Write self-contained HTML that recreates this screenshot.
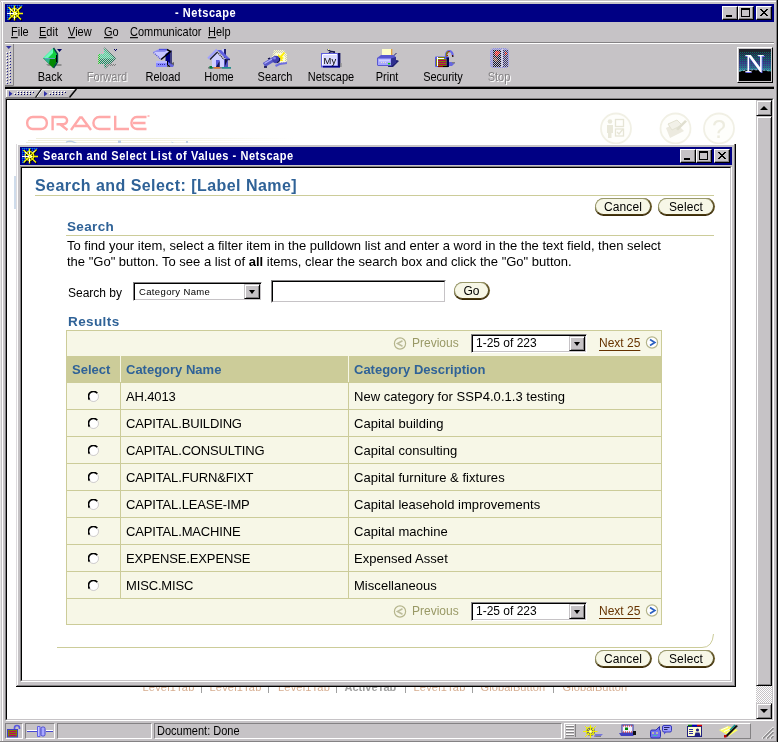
<!DOCTYPE html>
<html>
<head>
<meta charset="utf-8">
<title>Netscape</title>
<style>
html,body{margin:0;padding:0;}
body{width:781px;height:742px;overflow:hidden;background:#fff;font-family:"Liberation Sans",sans-serif;font-size:11px;color:#000;position:relative;}
.a{position:absolute;}
.t{position:absolute;white-space:nowrap;line-height:1;}
#win{left:0;top:0;width:778px;height:742px;background:#c6c3c6;}
.title{background:#000084;color:#fff;font-weight:bold;font-size:11px;}
.tb{position:absolute;width:16px;height:14px;background:#c6c3c6;box-sizing:border-box;border:1px solid;border-color:#fff #000 #000 #fff;box-shadow:inset -1px -1px 0 #848284;}
.menu span.m{position:absolute;top:27px;line-height:1;font-size:11px;transform:scaleY(1.125);transform-origin:0 84%;}
.menu u{text-decoration:underline;}
.lbl{position:absolute;top:71px;width:56px;text-align:center;font-size:11px;line-height:13px;transform:scaleY(1.125);transform-origin:0 81%;}
.dis{color:#848284;text-shadow:1px 1px 0 #fff;}
/* popup content */
.h1{color:#2f6297;font-weight:bold;font-size:16px;letter-spacing:0.45px;}
.h2{color:#2f6297;font-weight:bold;font-size:13.500px;letter-spacing:0.35px;}
.p{font-size:13px;}
.btn{position:absolute;height:17px;box-sizing:border-box;border:1px solid;border-color:#99996b #5a5229 #4a3a10 #99996b;border-radius:9px;background:#f7f7e7;font-size:12px;letter-spacing:0.1px;text-align:center;line-height:17px;box-shadow:0 1px 0 #3a2a08, 1px 0 0 #6b5a29;}
.row{position:absolute;left:67px;width:594px;height:26px;background:#f7f7e7;border-top:1px solid #cccc99;}
.row .c1{position:absolute;left:59px;top:6.500px;font-size:13px;letter-spacing:-0.15px;white-space:nowrap;line-height:1;}
.row .c2{position:absolute;left:287px;top:6.500px;font-size:13px;letter-spacing:0.04px;white-space:nowrap;line-height:1;}
.radio{position:absolute;left:21px;top:8px;}
.vl{position:absolute;top:0;width:1px;height:26px;background:#cccc99;}

.th{color:#2f6297;font-weight:bold;font-size:13px;letter-spacing:0;}
.sel{position:absolute;background:#fff;box-sizing:border-box;border:1px solid;border-color:#848284 #fff #fff #848284;box-shadow:inset 1px 1px 0 #000, inset -1px -1px 0 #c6c3c6;}
.dd{position:absolute;background:#c6c3c6;box-sizing:border-box;border:1px solid;border-color:#c6c3c6 #000 #000 #c6c3c6;box-shadow:inset 1px 1px 0 #fff, inset -1px -1px 0 #848284;}
.dd i{position:absolute;left:4px;top:5px;width:0;height:0;border:3.500px solid transparent;border-top:4px solid #000;border-bottom:0;}
.sb{position:absolute;background:#c6c3c6;box-sizing:border-box;border:1px solid;border-color:#c6c3c6 #000 #000 #c6c3c6;box-shadow:inset 1px 1px 0 #fff, inset -1px -1px 0 #848284;}
.sp{position:absolute;top:723px;height:16px;box-sizing:border-box;border:1px solid;border-color:#848284 #fff #fff #848284;}
.sy{transform:scaleY(1.125);transform-origin:0 84%;}
</style>
</head>
<body>
<div id="win" class="a" style="will-change:transform;">
  <!-- frame -->
  <div class="a" style="left:1px;top:1px;width:775px;height:1px;background:#fff"></div>
  <div class="a" style="left:0;top:2px;width:1px;height:740px;background:#e4e4e4"></div>
  <div class="a" style="left:2px;top:1px;width:1px;height:741px;background:#fff"></div>
  <div class="a" style="left:776px;top:0;width:1px;height:742px;background:#848284"></div>
  <div class="a" style="left:777px;top:0;width:1px;height:742px;background:#000"></div>
  <div class="a" style="left:0;top:741px;width:777px;height:1px;background:#848284"></div>
  <!-- title bar -->
  <div class="a title" style="left:5px;top:4px;width:769px;height:18px;">
    <svg class="a" style="left:2px;top:1px" width="16" height="16" viewBox="0 0 16 16"><defs><pattern id="nd1" width="2" height="2" patternUnits="userSpaceOnUse"><rect width="2" height="2" fill="#0018e0"/><rect x="0" y="0" width="1" height="1" fill="#0090c0"/><rect x="1" y="1" width="1" height="1" fill="#000084"/></pattern></defs><path d="M0,0H16V2H12L8,5L4,2L0,2z M0,2H3L5,8L3,15H0z" fill="url(#nd1)"/><g stroke="#000" stroke-width="1.500" fill="none"><path d="M2.500,2.500L15,15.500M15,2L2.500,15.500M8.500,1V16"/><circle cx="8.200" cy="8.800" r="4.300"/></g><g stroke="#f8f800" stroke-width="1.400" fill="none"><path d="M1.500,2L14,14.500M14.500,1.500L1.500,14.500M7.500,0.500V15.500M8,8.500H16"/><circle cx="7.500" cy="8" r="4.300" stroke-width="1.200"/></g><path d="M0,8.500H10" stroke="#fff" stroke-width="1.200"/><path d="M7.500,3.500V6M7.500,11V14" stroke="#fff" stroke-width="1"/><path d="M3,4l2.500,2M12.500,3l-1.500,1.500" stroke="#fff" stroke-width="1"/><rect x="6.500" y="7" width="2.500" height="2.500" fill="#fff"/><rect x="7" y="7.500" width="1.500" height="1.500" fill="#f8f800"/></svg>
    <span class="t sy" style="left:170px;top:4px;letter-spacing:0.56px;">- Netscape</span>
    <div class="tb" style="left:717px;top:2px;"><div class="a" style="left:3px;top:8px;width:6px;height:2px;background:#000"></div></div>
    <div class="tb" style="left:733px;top:2px;"><div class="a" style="left:2px;top:1px;width:9px;height:9px;box-sizing:border-box;border:1px solid #000;border-top-width:2px;"></div></div>
    <div class="tb" style="left:751px;top:2px;"><svg class="a" style="left:3px;top:2px" width="8" height="7"><path d="M0,0L7,7M1,0L8,7M7,0L0,7M8,0L1,7" stroke="#000" stroke-width="1" fill="none" shape-rendering="crispEdges"/></svg></div>
  </div>
  <!-- menubar -->
  <div class="menu">
    <span class="m" style="left:11px"><u>F</u>ile</span>
    <span class="m" style="left:39px"><u>E</u>dit</span>
    <span class="m" style="left:68px"><u>V</u>iew</span>
    <span class="m" style="left:104px"><u>G</u>o</span>
    <span class="m" style="left:130px"><u>C</u>ommunicator</span>
    <span class="m" style="left:208px"><u>H</u>elp</span>
  </div>
  <div class="a" style="left:5px;top:42px;width:769px;height:1px;background:#848284"></div>
  <div class="a" style="left:5px;top:43px;width:769px;height:1px;background:#fff"></div>
  <!-- toolbar -->

  <svg class="a" style="left:0;top:44px" width="778" height="42" viewBox="0 44 778 42">
    <defs>
      <pattern id="dith" width="2" height="2" patternUnits="userSpaceOnUse"><rect x="0" y="0" width="1" height="1" fill="#c6c3c6"/><rect x="1" y="1" width="1" height="1" fill="#c6c3c6"/></pattern>
      <pattern id="dithy" width="2" height="2" patternUnits="userSpaceOnUse"><rect x="0" y="0" width="1" height="1" fill="#ffffc0"/><rect x="1" y="1" width="1" height="1" fill="#ffffc0"/></pattern>
      <pattern id="grip" width="4" height="4" patternUnits="userSpaceOnUse"><rect x="0" y="0" width="1" height="1" fill="#fff"/><rect x="1" y="1" width="1" height="1" fill="#000060"/><rect x="2" y="2" width="1" height="1" fill="#fff"/><rect x="3" y="3" width="1" height="1" fill="#000060"/></pattern>
    </defs>
    <!-- gripper -->
    <path d="M5,85.500H13.500V44" stroke="#848284" fill="none"/>
    <path d="M6,46h5.500l-2.750,3z" fill="#3030a0"/>
    <g><rect x="6" y="52" width="1" height="1" fill="#fff"/><rect x="7" y="53" width="1" height="1" fill="#202088"/><rect x="9" y="51" width="1" height="1" fill="#fff"/><rect x="10" y="52" width="1" height="1" fill="#202088"/><rect x="6" y="55" width="1" height="1" fill="#fff"/><rect x="7" y="56" width="1" height="1" fill="#202088"/><rect x="9" y="54" width="1" height="1" fill="#fff"/><rect x="10" y="55" width="1" height="1" fill="#202088"/><rect x="6" y="58" width="1" height="1" fill="#fff"/><rect x="7" y="59" width="1" height="1" fill="#202088"/><rect x="9" y="57" width="1" height="1" fill="#fff"/><rect x="10" y="58" width="1" height="1" fill="#202088"/><rect x="6" y="61" width="1" height="1" fill="#fff"/><rect x="7" y="62" width="1" height="1" fill="#202088"/><rect x="9" y="60" width="1" height="1" fill="#fff"/><rect x="10" y="61" width="1" height="1" fill="#202088"/><rect x="6" y="64" width="1" height="1" fill="#fff"/><rect x="7" y="65" width="1" height="1" fill="#202088"/><rect x="9" y="63" width="1" height="1" fill="#fff"/><rect x="10" y="64" width="1" height="1" fill="#202088"/><rect x="6" y="67" width="1" height="1" fill="#fff"/><rect x="7" y="68" width="1" height="1" fill="#202088"/><rect x="9" y="66" width="1" height="1" fill="#fff"/><rect x="10" y="67" width="1" height="1" fill="#202088"/><rect x="6" y="70" width="1" height="1" fill="#fff"/><rect x="7" y="71" width="1" height="1" fill="#202088"/><rect x="9" y="69" width="1" height="1" fill="#fff"/><rect x="10" y="70" width="1" height="1" fill="#202088"/><rect x="6" y="73" width="1" height="1" fill="#fff"/><rect x="7" y="74" width="1" height="1" fill="#202088"/><rect x="9" y="72" width="1" height="1" fill="#fff"/><rect x="10" y="73" width="1" height="1" fill="#202088"/><rect x="6" y="76" width="1" height="1" fill="#fff"/><rect x="7" y="77" width="1" height="1" fill="#202088"/><rect x="9" y="75" width="1" height="1" fill="#fff"/><rect x="10" y="76" width="1" height="1" fill="#202088"/><rect x="6" y="79" width="1" height="1" fill="#fff"/><rect x="7" y="80" width="1" height="1" fill="#202088"/><rect x="9" y="78" width="1" height="1" fill="#fff"/><rect x="10" y="79" width="1" height="1" fill="#202088"/><rect x="6" y="82" width="1" height="1" fill="#fff"/><rect x="7" y="83" width="1" height="1" fill="#202088"/><rect x="9" y="81" width="1" height="1" fill="#fff"/><rect x="10" y="82" width="1" height="1" fill="#202088"/></g>
    <!-- Back -->
    <path d="M46,64h15l1,1l-1,1h-13z" fill="#909090"/>
    <path d="M43,58L53,48L53,58z" fill="#50f0a8"/>
    <path d="M44,58L53,49L53,58z" fill="#80ffc8" opacity=".6"/>
    <path d="M53,48L55,51L57,54L57,58L48,58L53,53z" fill="#10d040"/>
    <path d="M43,58H57V62L55,65L53,68z" fill="#008800"/>
    <path d="M43,58H50L49,64z" fill="#30b090"/>
    <path d="M45,58.5H55" stroke="#60a0c0" stroke-width="1"/>
    <path d="M53.5,48L55.5,51L57.5,54V62L55.5,65L53.5,68" stroke="#004848" stroke-width="1.4" fill="none"/>
    <path d="M56.5,55V62" stroke="#000" stroke-width="1"/>
    <path d="M57,49h5l-2.5,3z" fill="#000060"/>
    <!-- Forward (disabled, dithered) -->
    <g>
      <path d="M104,48L115,58L105,68L104,64H99V54H104z" fill="#40e8a0"/>
      <path d="M99,58.5H115L105,68L104,64H99z" fill="#109060"/>
      <path d="M104,48L115,58.5L105,68" stroke="#006040" stroke-width="1.2" fill="none"/>
      <path d="M99,54v10" stroke="#00e000" stroke-width="1.4"/>
      <path d="M107,64h10l-2,2h-10z" fill="#808080"/>
      <path d="M113,49h5l-2.5,3z" fill="#000060"/>
      <rect x="96" y="46" width="24" height="24" fill="url(#dith)"/>
    </g>
    <!-- Reload -->
    <path d="M161,67h11l2,-2v-3l-2,1z" fill="#606060"/>
    <path d="M153,52L159,49H168L172,52L161,60z" fill="#c8c8ff"/>
    <path d="M153,52L159,49H168L165,52z" fill="#9090f0"/>
    <path d="M153.5,52.5L161,59.5" stroke="#4040d0" stroke-width="1.2" stroke-dasharray="1,1"/>
    <path d="M159,49.5H167" stroke="#5050e0" stroke-width="1.4"/>
    <path d="M165.5,54L171.5,50V65H165.5z" fill="#000084"/>
    <path d="M170,51.5L172,52V65H170z" fill="#404080"/>
    <path d="M167,49.5L170.5,51.5L161,59.5" stroke="#000" stroke-width="1.5" fill="none"/>
    <rect x="156" y="61" width="11" height="6" fill="#8888ff"/>
    <rect x="156" y="61" width="11" height="2" fill="#b8b8ff"/>
    <path d="M158,64.5h8" stroke="#3030a0" stroke-width="1" stroke-dasharray="1,1"/>
    <path d="M167,61v4l4,2h2l1,-2l-3,-1z" fill="#6868e0"/>
    <path d="M167.5,61V65L170,66.5" stroke="#000" stroke-width="1" fill="none"/>
    <!-- Home -->
    <rect x="208" y="67" width="23" height="1.6" fill="#808080"/>
    <rect x="209.500" y="66" width="3" height="2.6" fill="#008040"/>
    <rect x="214" y="67" width="6" height="1.6" fill="#e08030"/>
    <rect x="222" y="67" width="9" height="1.6" fill="#209090"/>
    <rect x="222" y="49" width="2" height="7" fill="#c8c8ff"/>
    <rect x="224" y="49" width="2" height="9" fill="#202070"/>
    <path d="M217,50H221L230,59H226z" fill="#6060e0"/>
    <path d="M212,58L217,53L224,60V67H212z" fill="#d0d0ff"/>
    <path d="M224,59H228V67H224z" fill="#5050c0"/>
    <path d="M225,59H228L225,66z" fill="#101040"/>
    <path d="M208,58.5L217,49.5" stroke="#a0a0ff" stroke-width="2.2"/>
    <path d="M210,59.5L217,52.5" stroke="#181838" stroke-width="1.3"/>
    <path d="M217,52L224,59.5" stroke="#181838" stroke-width="1.2" stroke-dasharray="1,1"/>
    <path d="M226,59.500H230" stroke="#202070" stroke-width="1.4"/>
    <rect x="216" y="60" width="3.600" height="7" fill="#5858d8"/>
    <path d="M219.600,61V67H216z" fill="#181858"/>
    <!-- Search -->
    <path d="M274,50h10l3,4v9h-13l-2,-6z" fill="url(#dithy)"/>
    <path d="M275,53h8l2,4v5h-9z" fill="#ffffd0"/>
    <path d="M278,54l2,2l4,-4l1,1l-3,4l2,1l-2,1l1,2h-3l1,-2l-3,-2z" fill="#ffee00"/>
    <path d="M275,65l4,-2l8,-1v2l-7,1l-4,2z" fill="#7070e0"/>
    <path d="M264,65L274,59" stroke="#5858c8" stroke-width="4.600"/>
    <path d="M264.500,63.500L273,58.500" stroke="#b0b0ff" stroke-width="1.300"/>
    <path d="M264,67h3M268,59l2,-1" stroke="#000040" stroke-width="1.300"/>
    <circle cx="276" cy="59.500" r="3.700" fill="#4040b0"/>
    <circle cx="274.500" cy="58" r="1.500" fill="#8080f0"/>
    <path d="M277,62.500a3.700,3.700 0 0 0 2.500,-4.500" stroke="#101040" stroke-width="1.200" fill="none"/>
    <!-- My Netscape -->
    <path d="M327.500,49.500L331,51.500L335,52M331,51.500L329,53M332,51.500l3,1.500" stroke="#181848" stroke-width="1.300" fill="none"/>
    <rect x="328" y="49" width="1" height="1" fill="#ffffa0"/>
    <rect x="321" y="53" width="19" height="14.400" fill="#6060e0"/>
    <rect x="338" y="53" width="2.400" height="14" fill="#101060"/>
    <rect x="323" y="66" width="17" height="1.500" fill="#000084"/>
    <rect x="322.500" y="54.500" width="15" height="11" fill="#dcdcff"/>
    <path d="M322.500,65.500V54.500H337" stroke="#fff" stroke-width="1" fill="none"/>
    <text x="323.600" y="63.600" font-family="Liberation Sans" font-size="9.500" fill="#000" textLength="12.500" lengthAdjust="spacingAndGlyphs">My</text>
    <rect x="340" y="63" width="2" height="4" fill="#909090" opacity=".7"/>
    <!-- Print -->
    <path d="M392,57L396,53H397L393,57z" fill="#202070"/>
    <path d="M389,62l8,-2l2,1l-6,6h-5z" fill="#202070"/>
    <rect x="382" y="49" width="9.500" height="8" fill="#ffffc8"/>
    <rect x="391" y="49" width="1.300" height="8" fill="#e0a040"/>
    <path d="M377,58L381,55H393L396,57V62L391,66H378L377,65z" fill="#5858d0"/>
    <rect x="378" y="58.500" width="13" height="6.500" fill="#a8a8ff"/>
    <rect x="379" y="59.500" width="11" height="2" fill="#d0d0ff"/>
    <path d="M391,58.500L396,57V62L391,66z" fill="#303090"/>
    <rect x="388" y="63" width="2.300" height="1.400" fill="#00d000"/>
    <path d="M381,62.500h6" stroke="#e8e8c0" stroke-width="1" stroke-dasharray="1,1"/>
    <!-- Security -->
    <path d="M449,62h6v1l-3,3h-3z" fill="#6868e0"/>
    <rect x="452" y="62" width="3" height="1.300" fill="#808080"/>
    <path d="M446,57V54.500a3.300,3.300 0 0 1 6.600,0v1" stroke="#6868e8" stroke-width="2.200" fill="none"/>
    <path d="M446.500,57V54.500a2.800,2.800 0 0 1 2.800,-2.800" stroke="#808000" stroke-width="1.200" fill="none"/>
    <path d="M447.500,56V53.500M448.500,51.500l2,0M452.500,55v1" stroke="#c00000" stroke-width="1" stroke-dasharray="1,1" fill="none"/>
    <rect x="452" y="55.500" width="1.500" height="1.300" fill="#000"/>
    <rect x="435" y="56.500" width="14" height="10.500" rx="1" fill="#5858e0"/>
    <rect x="446.500" y="57.500" width="2.500" height="9.500" fill="#000050"/>
    <rect x="436" y="59" width="10.500" height="7" fill="#808000"/>
    <path d="M437,60.500h9M437,62.500h9M437,64.500h9" stroke="#b00060" stroke-width="1"/>
    <path d="M437.500,57V66" stroke="#fff" stroke-width="1"/>
    <path d="M438,57.500h7" stroke="#808000" stroke-width="1"/>
    <path d="M438,58.500h6" stroke="#fff" stroke-width="1"/>
    <path d="M438,66.500h5" stroke="#900000" stroke-width="1.200"/>
    <path d="M443,66.500h5" stroke="#000" stroke-width="1.200"/>
    <!-- Stop (disabled, dithered) -->
    <g>
      <rect x="490" y="48" width="19" height="20" rx="4" fill="#8888f0"/><rect x="501" y="49" width="2" height="18" fill="#d0d0ff"/>
      <rect x="493" y="50" width="8" height="17" fill="#101030"/>
      <rect x="503" y="50" width="5" height="17" fill="#303070"/>
      <path d="M494,52h6l-3,5z" fill="#ff0000"/>
      <circle cx="497" cy="53" r="2.300" fill="#ff0000"/>
      <rect x="505" y="52" width="2" height="3" fill="#e00000"/>
      <path d="M494,58l3,3" stroke="#ff8040" stroke-width="1.400"/>
      <rect x="488" y="46" width="24" height="24" fill="url(#dith)"/>
    </g>
  </svg>
  <div id="toolbar">
    <div class="lbl" style="left:22px">Back</div>
    <div class="lbl dis" style="left:79px">Forward</div>
    <div class="lbl" style="left:135px">Reload</div>
    <div class="lbl" style="left:191px">Home</div>
    <div class="lbl" style="left:247px">Search</div>
    <div class="lbl" style="left:303px">Netscape</div>
    <div class="lbl" style="left:359px">Print</div>
    <div class="lbl" style="left:415px">Security</div>
    <div class="lbl dis" style="left:471px">Stop</div>
  </div>

  <!-- N logo -->
  <div class="a" style="left:737px;top:47px;width:36px;height:36px;box-sizing:border-box;border:1px solid;border-color:#fff #000 #000 #fff;">
    <svg class="a" style="left:1px;top:1px" width="32" height="32" viewBox="0 0 32 32">
      <defs>
        <linearGradient id="ng" x1="0" y1="0" x2="0" y2="1"><stop offset="0" stop-color="#202028"/><stop offset=".12" stop-color="#202830"/><stop offset=".3" stop-color="#204858"/><stop offset=".42" stop-color="#383880"/><stop offset=".58" stop-color="#386888"/><stop offset=".66" stop-color="#40a0a8"/><stop offset="1" stop-color="#40a0a8"/></linearGradient>
        <pattern id="ndd" width="2" height="2" patternUnits="userSpaceOnUse"><rect x="0" y="0" width="1" height="1" fill="#30308a" opacity=".55"/><rect x="1" y="1" width="1" height="1" fill="#008c8c" opacity=".55"/></pattern>
      </defs>
      <rect width="32" height="32" fill="url(#ng)"/>
      <rect y="3" width="32" height="19" fill="url(#ndd)"/>
      <ellipse cx="16" cy="61" rx="60" ry="40" fill="#000"/>
      <path d="M0,22.300Q16,19.500 32,22.300" stroke="#d0d0e8" stroke-width="1" fill="none" stroke-dasharray="2,2" opacity=".6"/>
      <text x="5.500" y="23.500" font-family="Liberation Serif" font-size="26" fill="#7070f0" textLength="21" lengthAdjust="spacingAndGlyphs">N</text>
      <text x="5.500" y="23" font-family="Liberation Serif" font-size="26" fill="#fff" textLength="20" lengthAdjust="spacingAndGlyphs">N</text>
    </svg>
  </div>
  <!-- collapsed toolbars -->
  <svg class="a" style="left:0;top:88px" width="120" height="10" viewBox="0 88 120 10">
    <path d="M6.500,97V89.500H42" stroke="#fff" fill="none"/>
    <path d="M36.500,97.500L42.500,89.500H76" stroke="#fff" fill="none"/>
    <path d="M6,97.500H68.500L75.500,89" stroke="#848284" fill="none"/>
    <path d="M35.500,97.500L41.500,89" stroke="#000" stroke-width="1.200" fill="none"/>
    <path d="M69.500,97.500L76.500,89" stroke="#000" stroke-width="1.200" fill="none"/>
    <path d="M9,91l3.500,2.700L9,96.400z" fill="#3030a8"/>
    <path d="M44,91l3.500,2.700L44,96.400z" fill="#3030a8"/>
    <g fill="#000060"><rect x="15" y="94" width="1" height="1"/>
      <rect x="18" y="92" width="1" height="1"/><rect x="18" y="94" width="1" height="1"/><rect x="21" y="92" width="1" height="1"/><rect x="21" y="94" width="1" height="1"/><rect x="24" y="92" width="1" height="1"/><rect x="24" y="94" width="1" height="1"/><rect x="27" y="92" width="1" height="1"/><rect x="27" y="94" width="1" height="1"/><rect x="30" y="92" width="1" height="1"/><rect x="30" y="94" width="1" height="1"/><rect x="33" y="92" width="1" height="1"/>
      <rect x="50" y="94" width="1" height="1"/><rect x="53" y="92" width="1" height="1"/><rect x="53" y="94" width="1" height="1"/><rect x="56" y="92" width="1" height="1"/><rect x="56" y="94" width="1" height="1"/><rect x="59" y="92" width="1" height="1"/><rect x="59" y="94" width="1" height="1"/><rect x="62" y="92" width="1" height="1"/><rect x="62" y="94" width="1" height="1"/><rect x="65" y="92" width="1" height="1"/>
    </g>
    <g fill="#fff"><rect x="17" y="91" width="1" height="1"/><rect x="20" y="91" width="1" height="1"/><rect x="23" y="91" width="1" height="1"/><rect x="26" y="91" width="1" height="1"/><rect x="29" y="91" width="1" height="1"/><rect x="32" y="91" width="1" height="1"/><rect x="14" y="93" width="1" height="1"/><rect x="17" y="93" width="1" height="1"/><rect x="20" y="93" width="1" height="1"/><rect x="23" y="93" width="1" height="1"/><rect x="26" y="93" width="1" height="1"/><rect x="29" y="93" width="1" height="1"/>
      <rect x="52" y="91" width="1" height="1"/><rect x="55" y="91" width="1" height="1"/><rect x="58" y="91" width="1" height="1"/><rect x="61" y="91" width="1" height="1"/><rect x="64" y="91" width="1" height="1"/><rect x="49" y="93" width="1" height="1"/><rect x="52" y="93" width="1" height="1"/><rect x="55" y="93" width="1" height="1"/><rect x="58" y="93" width="1" height="1"/><rect x="61" y="93" width="1" height="1"/>
    </g>
  </svg>
  <div class="a" style="left:5px;top:86px;width:769px;height:1px;background:#848284"></div>
  <div class="a" style="left:5px;top:87px;width:769px;height:2px;background:#000"></div>
  <!-- content area sunken -->
  <div class="a" style="left:5px;top:98px;width:769px;height:623px;background:#fff;box-sizing:border-box;border:1px solid;border-color:#848284 #fff #fff #848284;">
    <div class="a" style="left:0;top:0;right:0;bottom:0;box-sizing:border-box;border:1px solid;border-color:#000 #c6c3c6 #c6c3c6 #000;"></div>
  </div>


  <!-- page behind -->
  <svg class="a" style="left:7px;top:100px" width="749" height="619" viewBox="7 100 749 619">
    <g fill="none" stroke="#ffa9a9" stroke-width="2.400">
      <rect x="27.200" y="117" width="19.600" height="12" rx="5.500"/>
      <path d="M52.600,130.200V117H63.500a3.600,3.600 0 0 1 0,7.200H56.500M60,124.200L67.500,130"/>
      <path d="M71,130L80,117.500h1.800L91,130M75,126H88"/>
      <path d="M110.500,117H99.200a5.800,6 0 0 0 0,12H110.500"/>
      <path d="M115.200,115.800V129H129"/>
      <path d="M146.500,117H136.800a5.400,6 0 0 0 0,12H146.500M133,123H145.500"/>
    </g>
    <rect x="147.500" y="115" width="2" height="2" fill="#ffc4c4"/>
    <defs><linearGradient id="fade" gradientUnits="userSpaceOnUse" x1="150" y1="0" x2="295" y2="0"><stop offset="0" stop-color="#efeedd"/><stop offset="1" stop-color="#efeedd" stop-opacity="0"/></linearGradient></defs>
    <g stroke="url(#fade)" stroke-width="1">
      <path d="M36,138.500H300"/><path d="M28,140.500H300"/><path d="M26,142.500H300"/>
    </g>
    <g fill="#bccde3">
      <path d="M66,143v-1.500q4,-2 8,0l3,1.500h-3l-2,-1h-4z"/>
      <rect x="118" y="140.500" width="3" height="2.500"/>
      <path d="M171,141.500l3,1.500h-2z"/><rect x="186" y="141" width="2" height="2"/>
    </g>
    <rect x="14" y="176" width="2" height="33" fill="#cfdceb"/>
    <!-- faded round icons -->
    <g fill="#fefefb" stroke="#f1f0e5" stroke-width="1.800">
      <circle cx="616" cy="128.500" r="15"/>
      <circle cx="675.500" cy="128.500" r="15"/>
      <circle cx="719" cy="128.500" r="15"/>
    </g>
    <g fill="#e9e8da" transform="translate(0,1)">
      <circle cx="610" cy="120.500" r="2.300"/>
      <path d="M607,124h6v8h-1.500v5h-3.500v-5h-1z"/>
      <rect x="615.500" y="118.500" width="8" height="7" fill="none" stroke="#e6e5d6" stroke-width="1.300"/>
      <rect x="615.500" y="128" width="8" height="7" fill="none" stroke="#e6e5d6" stroke-width="1.300"/>
      <path d="M617,131l2,2l4,-5" stroke="#e6e5d6" stroke-width="1.300" fill="none"/>
      <path d="M666,127l10,-5l8,8l-14,7z" fill="#eceadf"/>
      <path d="M668,123l9,-4l5,5l-10,5z" fill="#f2f1e8" stroke="#e3e2d2" stroke-width="1"/>
      <path d="M676,128l9,-9l2,1.500l-9,9z" fill="#e0dfcf"/>
    </g>
    <text x="712" y="137.500" font-family="Liberation Sans" font-size="25" fill="#edecdf">?</text>
    <!-- bottom tab text peeking under popup -->
    <g font-family="Liberation Sans" font-size="11" fill="#d6ad90">
      <text x="142.500" y="691" letter-spacing="0.2">Level1Tab</text>
      <text x="209.500" y="691" letter-spacing="0.2">Level1Tab</text>
      <text x="278" y="691" letter-spacing="0.2">Level1Tab</text>
      <text x="344.500" y="691" font-weight="bold" fill="#a0a0a0">ActiveTab</text>
      <text x="413.500" y="691" letter-spacing="0.2">Level1Tab</text>
      <text x="480.500" y="691" letter-spacing="0.1">GlobalButton</text>
      <text x="562.500" y="691" letter-spacing="0.1">GlobalButton</text>
    </g>
    <g stroke="#a0a0a0" stroke-width="1"><path d="M201.500,683v10M268.500,683v10M336.500,683v10M405.500,683v10M472.500,683v10M553.500,683v10"/></g>
  </svg>
  <!-- vertical scrollbar -->
  <div class="a" style="left:756px;top:100px;width:16px;height:619px;background:#c6c3c6;">
    <div class="a" style="left:0;top:586px;width:16px;height:17px;background-image:conic-gradient(#fff 25%,#c6c3c6 0 50%,#fff 0 75%,#c6c3c6 0);background-size:2px 2px;"></div>
    <div class="sb" style="left:0;top:0;width:16px;height:16px;"><i style="position:absolute;left:3px;top:5px;width:0;height:0;border:4px solid transparent;border-bottom:4px solid #000;border-top:0;"></i></div>
    <div class="sb" style="left:0;top:16px;width:16px;height:570px;"></div>
    <div class="sb" style="left:0;top:603px;width:16px;height:16px;"><i style="position:absolute;left:3px;top:5px;width:0;height:0;border:4px solid transparent;border-top:4px solid #000;border-bottom:0;"></i></div>
  </div>
  <!-- ===== popup window ===== -->
  <div id="popup" class="a" style="left:16px;top:144px;width:720px;height:543px;background:#c6c3c6;">
    <div class="a" style="left:0;top:0;width:719px;height:1px;background:#fff"></div>
    <div class="a" style="left:0;top:0;width:1px;height:542px;background:#dedbde"></div>
    <div class="a" style="left:1px;top:0;width:1px;height:541px;background:#fff"></div>
    <div class="a" style="left:719px;top:0;width:1px;height:543px;background:#000"></div>
    <div class="a" style="left:0;top:542px;width:720px;height:1px;background:#000"></div>
    <div class="a" style="left:718px;top:0;width:1px;height:542px;background:#848284"></div>
    <div class="a" style="left:1px;top:541px;width:718px;height:1px;background:#848284"></div>
    <div class="a title" style="left:4px;top:3px;width:712px;height:18px;">
<svg class="a" style="left:2px;top:1px" width="16" height="16" viewBox="0 0 16 16"><defs><pattern id="nd2" width="2" height="2" patternUnits="userSpaceOnUse"><rect width="2" height="2" fill="#0018e0"/><rect x="0" y="0" width="1" height="1" fill="#0090c0"/><rect x="1" y="1" width="1" height="1" fill="#000084"/></pattern></defs><path d="M0,0H16V2H12L8,5L4,2L0,2z M0,2H3L5,8L3,15H0z" fill="url(#nd2)"/><g stroke="#000" stroke-width="1.500" fill="none"><path d="M2.500,2.500L15,15.500M15,2L2.500,15.500M8.500,1V16"/><circle cx="8.200" cy="8.800" r="4.300"/></g><g stroke="#f8f800" stroke-width="1.400" fill="none"><path d="M1.500,2L14,14.500M14.500,1.500L1.500,14.500M7.500,0.500V15.500M8,8.500H16"/><circle cx="7.500" cy="8" r="4.300" stroke-width="1.200"/></g><path d="M0,8.500H10" stroke="#fff" stroke-width="1.200"/><path d="M7.500,3.500V6M7.500,11V14" stroke="#fff" stroke-width="1"/><path d="M3,4l2.500,2M12.500,3l-1.500,1.500" stroke="#fff" stroke-width="1"/><rect x="6.500" y="7" width="2.500" height="2.500" fill="#fff"/><rect x="7" y="7.500" width="1.500" height="1.500" fill="#f8f800"/></svg>
      <span class="t sy" style="left:23px;top:4px;letter-spacing:0.54px;">Search and Select List of Values - Netscape</span>
      <div class="tb" style="left:660px;top:2px;"><div class="a" style="left:3px;top:8px;width:6px;height:2px;background:#000"></div></div>
      <div class="tb" style="left:676px;top:2px;"><div class="a" style="left:2px;top:1px;width:9px;height:9px;box-sizing:border-box;border:1px solid #000;border-top-width:2px;"></div></div>
      <div class="tb" style="left:694px;top:2px;"><svg class="a" style="left:3px;top:2px" width="8" height="7"><path d="M0,0L7,7M1,0L8,7M7,0L0,7M8,0L1,7" stroke="#000" stroke-width="1" fill="none" shape-rendering="crispEdges"/></svg></div>
    </div>
    <!-- client -->
    <div class="a" style="left:4px;top:22px;width:712px;height:516px;background:#fff;box-sizing:border-box;border:1px solid;border-color:#848284 #fff #fff #848284;">
      <div class="a" style="left:0;top:0;right:0;bottom:0;box-sizing:border-box;border:1px solid;border-color:#000 #c6c3c6 #c6c3c6 #000;"></div>
    </div>
  </div>
  <!-- popup page content (page coordinates) -->
  <div id="pc">
    <span class="t h1" style="left:35px;top:178px;">Search and Select: [Label Name]</span>
    <div class="a" style="left:35px;top:195px;width:679px;height:1px;background:#cccc99"></div>
    <div class="btn" style="left:595px;top:198px;width:56px;">Cancel</div>
    <div class="btn" style="left:658px;top:198px;width:56px;">Select</div>
    <span class="t h2" style="left:67px;top:220px;">Search</span>
    <div class="a" style="left:66px;top:235px;width:648px;height:1px;background:#cccc99"></div>
    <span class="t p" style="left:67px;top:239px;">To find your item, select a filter item in the pulldown list and enter a word in the the text field, then select</span>
    <span class="t p" style="left:67px;top:255px;">the "Go" button. To see a list of <b>all</b> items, clear the search box and click the "Go" button.</span>
    <span class="t" style="left:68px;top:287px;font-size:12px;">Search by</span>
    <div class="sel" style="left:133px;top:282px;width:129px;height:19px;"><span class="t" style="left:5px;top:4px;font-size:9.500px;letter-spacing:0.36px;">Category Name</span><div class="dd" style="left:110px;top:1px;width:16px;height:15px;"><i></i></div></div>
    <div class="a" style="left:271px;top:280px;width:175px;height:23px;background:#fff;box-sizing:border-box;border:1px solid;border-color:#848284 #fff #fff #848284;"><div class="a" style="left:0;top:0;right:0;bottom:0;box-sizing:border-box;border:1px solid;border-color:#000 #c6c3c6 #c6c3c6 #000;"></div></div>
    <div class="btn" style="left:454px;top:282px;width:35px;">Go</div>
    <span class="t h2" style="left:68px;top:315px;letter-spacing:0.4px;">Results</span>
    <!-- table -->
    <div class="a" style="left:66px;top:330px;width:596px;height:295px;background:#f7f7e7;box-sizing:border-box;border:1px solid #cccc99;"></div>
    <svg class="a" style="left:393px;top:337px" width="14" height="14" viewBox="0 0 14 14"><circle cx="7" cy="6.500" r="5.600" fill="#f7f7e7" stroke="#b5b58c" stroke-width="1.200"/><path d="M9.500,3.800L4.500,6.500L9.500,9.200" stroke="#bdbd9c" stroke-width="1.600" fill="none"/></svg>
    <span class="t" style="left:412px;top:337px;font-size:12px;color:#999966;">Previous</span>
    <div class="sel" style="left:471px;top:334px;width:116px;height:19px;"><span class="t" style="left:4px;top:2px;font-size:12px;">1-25 of 223</span><div class="dd" style="left:97px;top:1px;width:16px;height:15px;"><i></i></div></div>
    <span class="t" style="left:599px;top:337px;font-size:12px;color:#663300;text-decoration:underline;text-underline-offset:2.500px;">Next 25</span>
    <svg class="a" style="left:645px;top:336px" width="14" height="14" viewBox="0 0 14 14"><circle cx="7" cy="6.500" r="5.600" fill="#fff" stroke="#b5b58c" stroke-width="1.200"/><path d="M5,3.600L9.800,6.500L5,9.400" stroke="#2a5fc0" stroke-width="1.700" fill="none"/></svg>

    <div class="a" style="left:67px;top:356px;width:594px;height:26px;background:#cccc99;"></div>
    <div class="a" style="left:120px;top:356px;width:1px;height:26px;background:#f7f7e7;"></div>
    <div class="a" style="left:348px;top:356px;width:1px;height:26px;background:#f7f7e7;"></div>
    <span class="t th" style="left:72px;top:363px;">Select</span>
    <span class="t th" style="left:126px;top:363px;">Category Name</span>
    <span class="t th" style="left:354px;top:363px;">Category Description</span>
    <div class="row" style="top:382px"><svg class="radio" width="12" height="12" viewBox="0 0 12 12"><circle cx="5.500" cy="5.500" r="4.600" fill="#fff"/><path d="M1.700,8.800A5,5 0 0 1 9.300,2.200" stroke="#000" stroke-width="1.700" fill="none"/><path d="M9.300,2.200A5,5 0 0 1 1.700,8.800" stroke="#d0cdd0" stroke-width="1" fill="none"/></svg><div class="vl" style="left:53px"></div><div class="vl" style="left:281px"></div><span class="c1">AH.4013</span><span class="c2">New category for SSP4.0.1.3 testing</span></div>
    <div class="row" style="top:409px"><svg class="radio" width="12" height="12" viewBox="0 0 12 12"><circle cx="5.500" cy="5.500" r="4.600" fill="#fff"/><path d="M1.700,8.800A5,5 0 0 1 9.300,2.200" stroke="#000" stroke-width="1.700" fill="none"/><path d="M9.300,2.200A5,5 0 0 1 1.700,8.800" stroke="#d0cdd0" stroke-width="1" fill="none"/></svg><div class="vl" style="left:53px"></div><div class="vl" style="left:281px"></div><span class="c1">CAPITAL.BUILDING</span><span class="c2">Capital building</span></div>
    <div class="row" style="top:436px"><svg class="radio" width="12" height="12" viewBox="0 0 12 12"><circle cx="5.500" cy="5.500" r="4.600" fill="#fff"/><path d="M1.700,8.800A5,5 0 0 1 9.300,2.200" stroke="#000" stroke-width="1.700" fill="none"/><path d="M9.300,2.200A5,5 0 0 1 1.700,8.800" stroke="#d0cdd0" stroke-width="1" fill="none"/></svg><div class="vl" style="left:53px"></div><div class="vl" style="left:281px"></div><span class="c1">CAPITAL.CONSULTING</span><span class="c2">Capital consulting</span></div>
    <div class="row" style="top:463px"><svg class="radio" width="12" height="12" viewBox="0 0 12 12"><circle cx="5.500" cy="5.500" r="4.600" fill="#fff"/><path d="M1.700,8.800A5,5 0 0 1 9.300,2.200" stroke="#000" stroke-width="1.700" fill="none"/><path d="M9.300,2.200A5,5 0 0 1 1.700,8.800" stroke="#d0cdd0" stroke-width="1" fill="none"/></svg><div class="vl" style="left:53px"></div><div class="vl" style="left:281px"></div><span class="c1">CAPITAL.FURN&amp;FIXT</span><span class="c2">Capital furniture &amp; fixtures</span></div>
    <div class="row" style="top:490px"><svg class="radio" width="12" height="12" viewBox="0 0 12 12"><circle cx="5.500" cy="5.500" r="4.600" fill="#fff"/><path d="M1.700,8.800A5,5 0 0 1 9.300,2.200" stroke="#000" stroke-width="1.700" fill="none"/><path d="M9.300,2.200A5,5 0 0 1 1.700,8.800" stroke="#d0cdd0" stroke-width="1" fill="none"/></svg><div class="vl" style="left:53px"></div><div class="vl" style="left:281px"></div><span class="c1">CAPITAL.LEASE-IMP</span><span class="c2">Capital leasehold improvements</span></div>
    <div class="row" style="top:517px"><svg class="radio" width="12" height="12" viewBox="0 0 12 12"><circle cx="5.500" cy="5.500" r="4.600" fill="#fff"/><path d="M1.700,8.800A5,5 0 0 1 9.300,2.200" stroke="#000" stroke-width="1.700" fill="none"/><path d="M9.300,2.200A5,5 0 0 1 1.700,8.800" stroke="#d0cdd0" stroke-width="1" fill="none"/></svg><div class="vl" style="left:53px"></div><div class="vl" style="left:281px"></div><span class="c1">CAPITAL.MACHINE</span><span class="c2">Capital machine</span></div>
    <div class="row" style="top:544px"><svg class="radio" width="12" height="12" viewBox="0 0 12 12"><circle cx="5.500" cy="5.500" r="4.600" fill="#fff"/><path d="M1.700,8.800A5,5 0 0 1 9.300,2.200" stroke="#000" stroke-width="1.700" fill="none"/><path d="M9.300,2.200A5,5 0 0 1 1.700,8.800" stroke="#d0cdd0" stroke-width="1" fill="none"/></svg><div class="vl" style="left:53px"></div><div class="vl" style="left:281px"></div><span class="c1">EXPENSE.EXPENSE</span><span class="c2">Expensed Asset</span></div>
    <div class="row" style="top:571px"><svg class="radio" width="12" height="12" viewBox="0 0 12 12"><circle cx="5.500" cy="5.500" r="4.600" fill="#fff"/><path d="M1.700,8.800A5,5 0 0 1 9.300,2.200" stroke="#000" stroke-width="1.700" fill="none"/><path d="M9.300,2.200A5,5 0 0 1 1.700,8.800" stroke="#d0cdd0" stroke-width="1" fill="none"/></svg><div class="vl" style="left:53px"></div><div class="vl" style="left:281px"></div><span class="c1">MISC.MISC</span><span class="c2">Miscellaneous</span></div>

    <div class="a" style="left:67px;top:598px;width:594px;height:1px;background:#cccc99;"></div>
    <svg class="a" style="left:393px;top:605px" width="14" height="14" viewBox="0 0 14 14"><circle cx="7" cy="6.500" r="5.600" fill="#f7f7e7" stroke="#b5b58c" stroke-width="1.200"/><path d="M9.500,3.800L4.500,6.500L9.500,9.200" stroke="#bdbd9c" stroke-width="1.600" fill="none"/></svg>
    <span class="t" style="left:412px;top:605px;font-size:12px;color:#999966;">Previous</span>
    <div class="sel" style="left:471px;top:602px;width:116px;height:19px;"><span class="t" style="left:4px;top:2px;font-size:12px;">1-25 of 223</span><div class="dd" style="left:97px;top:1px;width:16px;height:15px;"><i></i></div></div>
    <span class="t" style="left:599px;top:605px;font-size:12px;color:#663300;text-decoration:underline;text-underline-offset:2.500px;">Next 25</span>
    <svg class="a" style="left:645px;top:604px" width="14" height="14" viewBox="0 0 14 14"><circle cx="7" cy="6.500" r="5.600" fill="#fff" stroke="#b5b58c" stroke-width="1.200"/><path d="M5,3.600L9.800,6.500L5,9.400" stroke="#2a5fc0" stroke-width="1.700" fill="none"/></svg>

    <svg class="a" style="left:56px;top:631px" width="660" height="20" viewBox="0 0 660 20"><path d="M1,16.500H646Q656.500,16.500 657.500,3" stroke="#cccc99" stroke-width="1" fill="none"/></svg>
    <div class="btn" style="left:595px;top:650px;width:56px;">Cancel</div>
    <div class="btn" style="left:658px;top:650px;width:56px;">Select</div>
  </div>

  <!-- status bar -->
  <div class="sp" style="left:5px;width:18px;"></div>
  <div class="sp" style="left:25px;width:30px;"></div>
  <div class="sp" style="left:57px;width:95px;"></div>
  <div class="sp" style="left:154px;width:408px;"><span class="t sy" style="left:2px;top:2px;font-size:11px;">Document: Done</span></div>
  <div class="a" style="left:564px;top:723px;width:187px;height:16px;box-sizing:border-box;border:1px solid;border-color:#fff #848284 #848284 #fff;"></div>
  <svg class="a" style="left:0;top:721px" width="778" height="21" viewBox="0 721 778 21">
    <!-- lock -->
    <path d="M14.500,731v-3a2.500,2.500 0 0 1 5,0v1" stroke="#5858e0" stroke-width="1.600" fill="none"/>
    <rect x="7.500" y="729.500" width="10" height="7.500" fill="#808000" stroke="#4040c8" stroke-width="1"/>
    <path d="M9,731.500h7M9,733.500h7M9,735.500h7" stroke="#c00060" stroke-width="1"/>
    <!-- connection plug -->
    <path d="M27,730.500h10M46,730.500h7" stroke="#fff" stroke-width="1"/>
    <path d="M27,731.500h10M46,731.500h7" stroke="#4848d0" stroke-width="1"/>
    <rect x="37" y="726" width="3.500" height="11" rx="1" fill="#6060e8"/>
    <rect x="38" y="727" width="1.500" height="9" fill="#c8c8ff"/>
    <rect x="41" y="727" width="4" height="9" rx="1.500" fill="#a8a8ff" stroke="#4848d0" stroke-width="1"/>
    <!-- component bar gripper -->
    <g stroke="#fff" stroke-width="1"><path d="M566,725.500h8M566,728.500h8M566,731.500h8M566,734.500h8"/></g>
    <g stroke="#848284" stroke-width="1"><path d="M566,726.500h8M566,729.500h8M566,732.500h8M566,735.500h8M575.500,724v13"/></g>
    <!-- navigator wheel -->
    <circle cx="590.500" cy="731.500" r="4.600" fill="#303030" opacity=".55"/>
    <g stroke="#f0f000" stroke-width="1" fill="none"><circle cx="590" cy="731" r="4"/><path d="M583,731.500h14.500M590.500,725v13M585,726l11,11M596,726l-11,11"/></g>
    <rect x="589.500" y="730.500" width="2" height="2" fill="#fff"/>
    <path d="M595,734h8l-3,3h-6z" fill="#7878d8"/><path d="M596,736.500h5" stroke="#808080"/>
    <!-- mail -->
    <rect x="622" y="725" width="11" height="8" fill="#f0f0ff" stroke="#3030a0" stroke-width="1"/>
    <path d="M623,726h9M623,732h9" stroke="#e00000" stroke-width="1" stroke-dasharray="1,1"/>
    <rect x="625" y="727.500" width="3" height="2.500" fill="#008000"/>
    <path d="M619,733h16l1,2h-2l-1,1h-12z" fill="#4040c0"/>
    <rect x="633" y="731" width="3" height="4" fill="#101010"/>
    <!-- chat -->
    <path d="M650.500,731.500q0,-1.500 1.500,-1.500h4l3.500,-3.500v3.500q1,0 1,1.500v5q0,1.500 -1.500,1.500h-7q-1.500,0 -1.500,-1.500z" fill="#7070f0" stroke="#3030b0" stroke-width="1"/>
    <path d="M652,733h2M656,733h2" stroke="#ffff60" stroke-width="1.200"/><path d="M653,735.500h4" stroke="#40c0a0" stroke-width="1"/>
    <rect x="662.500" y="725.500" width="9" height="6.500" rx="1.500" fill="#9c9cff" stroke="#3838b8" stroke-width="1"/>
    <path d="M664,732v2.500l2.500,-2.500z" fill="#5050d0"/>
    <path d="M664,727.500h5.500M664,729.500h3.500" stroke="#202060" stroke-width="1"/>
    <!-- address book -->
    <rect x="687.500" y="726.500" width="14" height="10" fill="#ffffd0" stroke="#202080" stroke-width="1"/>
    <path d="M688,725.500h4" stroke="#008000" stroke-width="1.400"/><path d="M692,725.500h5" stroke="#0000c0" stroke-width="1.400"/><path d="M697,725.500h5" stroke="#e00000" stroke-width="1.400"/>
    <path d="M689,729.500h4M689,731.500h4M689,733.500h4" stroke="#3030a0" stroke-width="1"/>
    <circle cx="697.500" cy="730" r="1.600" fill="#202080"/><path d="M694.500,736l1,-3.500h4l1,3.500z" fill="#202080"/>
    <!-- composer -->
    <path d="M719,730l9,-4l10,4l-9,6z" fill="#ffff60"/>
    <path d="M721,730l7,-3M724,731.500l7,-3M727,733l7,-3" stroke="#fff" stroke-width="1"/>
    <path d="M725,736l11,-11l2,1l-11,11z" fill="#101010"/>
    <path d="M730,730l5,-5" stroke="#009090" stroke-width="1.300"/>
    <rect x="724" y="735" width="2.500" height="2.500" fill="#c00000"/>
    <!-- resize grip -->
    <g stroke-width="1.200"><path d="M762,738.500l11.500,-11.500M766,738.500l7.500,-7.500M770,738.500l3.500,-3.500" stroke="#fff"/><path d="M763,738.500l10.500,-10.500M767,738.500l6.500,-6.500M771,738.500l2.500,-2.500" stroke="#848284"/></g>
  </svg>
</div>
</body>
</html>
